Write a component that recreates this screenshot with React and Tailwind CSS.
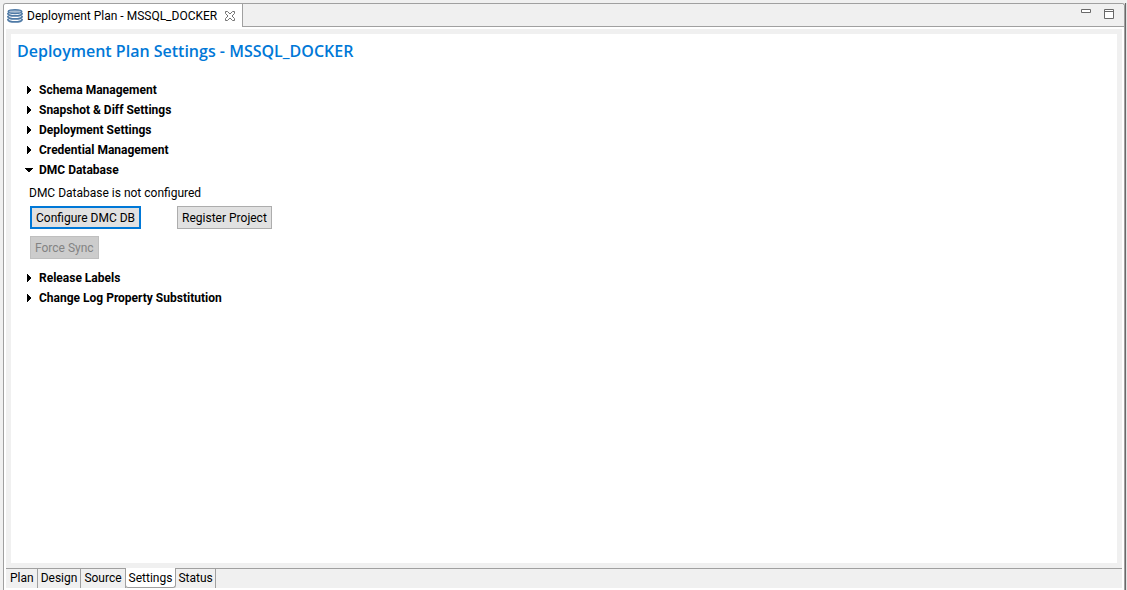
import { useState } from "react";

function Arrow({ open }) {
  return (
    <svg width="8" height="8" viewBox="0 0 8 8" shapeRendering="crispEdges" aria-hidden="true">
      {open ? <path d="M0 2h8v1H7v1H6v1H5v1H3V5H2V4H1V3H0z" /> : <path d="M2 0h1v1h1v1h1v1h1v2H5v1H4v1H3v1H2z" />}
    </svg>
  );
}

function Section({ title, defaultOpen = false, children }) {
  const [open, setOpen] = useState(defaultOpen);
  return (
    <section>
      <h2>
        <button
          type="button"
          aria-expanded={open}
          onClick={() => setOpen(!open)}
          className="flex h-5 items-center gap-1.5 text-xs font-bold whitespace-nowrap"
        >
          <Arrow open={open} />
          {title}
        </button>
      </h2>
      {open && children}
    </section>
  );
}

function DatabaseIcon() {
  return (
    <svg width="16" height="14" viewBox="0 0 16 14" aria-hidden="true">
      <ellipse cx="8" cy="2.600" rx="6.800" ry="1.900" fill="#a9bdd2" stroke="#4f7aa6" strokeWidth="1.400" />
      <path
        d="M1 4.700c.8 2.900 13.200 2.900 14 0M1 7.700c.8 2.900 13.200 2.900 14 0M1 10.700c.8 2.900 13.200 2.900 14 0"
        fill="none"
        stroke="#4f7aa6"
        strokeWidth="1.900"
        strokeLinecap="round"
      />
    </svg>
  );
}

function CloseIcon() {
  return (
    <svg width="10" height="10" viewBox="0 0 10 10" fill="#fff" stroke="#737373" aria-hidden="true">
      <path d="M.5.5h2L5 3 7.500.5h2v2L7 5l2.500 2.500v2h-2L5 7 2.500 9.500h-2v-2L3 5 .5 2.500z" />
    </svg>
  );
}

const pages = ["Plan", "Design", "Source", "Settings", "Status"];

export default function App() {
  const [page, setPage] = useState("Settings");
  return (
    <div className="flex h-screen bg-[#f0f0f0] pt-[3px] pl-[3px] font-[Roboto,'Open_Sans',sans-serif] text-xs text-black">
      <div className="flex min-w-0 flex-1 flex-col rounded-t-[3px] border-x border-t border-[#a0a0a0] bg-white">
        <header className="flex h-[23px] shrink-0">
          <div className="flex items-center gap-1 rounded-tl-[3px] bg-white pr-[7px] pl-[3px]">
            <DatabaseIcon />
            <span className="whitespace-nowrap">Deployment Plan - MSSQL_DOCKER</span>
            <button type="button" aria-label="Close" className="ml-1">
              <CloseIcon />
            </button>
          </div>
          <div className="flex flex-1 items-start justify-end gap-[13px] rounded-tr-[3px] border-b border-l border-[#a0a0a0] bg-[#f0f0f0] pt-[5px] pr-2.5">
            <button type="button" aria-label="Minimize">
              <svg width="10" height="10" viewBox="0 0 10 10" fill="#fff" stroke="#696969" aria-hidden="true">
                <path d="M.5.5h9v3h-9z" />
              </svg>
            </button>
            <button type="button" aria-label="Maximize">
              <svg width="10" height="10" viewBox="0 0 10 10" fill="#fff" stroke="#696969" aria-hidden="true">
                <path d="M.5.5h9v9h-9zM.5 2.500h9" />
              </svg>
            </button>
          </div>
        </header>

        <div className="m-0.5 flex min-h-0 flex-1 flex-col bg-[#f0f0f0]">
          <main className="m-[5px] min-h-0 flex-1 overflow-hidden bg-white px-1.5 pt-[5px]">
            <h1 className="font-['Open_Sans',sans-serif] text-base leading-6 font-semibold whitespace-nowrap text-[#0078d7]">
              Deployment Plan Settings - MSSQL_DOCKER
            </h1>
            <div className="mt-[17px] pl-2">
              <Section title="Schema Management" />
              <Section title="Snapshot & Diff Settings" />
              <Section title="Deployment Settings" />
              <Section title="Credential Management" />
              <Section title="DMC Database" defaultOpen>
                <div className="pt-[3px] pb-2 pl-1">
                  <p className="leading-5">DMC Database is not configured</p>
                  <div className="mt-[3px] grid w-max grid-cols-[auto_auto] gap-x-9 gap-y-[7px] pb-px pl-px">
                    <button type="button" className="h-[23px] border-2 border-[#0078d7] bg-[#e1e1e1] px-1 whitespace-nowrap">
                      Configure DMC DB
                    </button>
                    <button type="button" className="h-[23px] border border-[#adadad] bg-[#e1e1e1] px-1 whitespace-nowrap">
                      Register Project
                    </button>
                    <button
                      type="button"
                      disabled
                      className="h-[23px] justify-self-start border border-[#bfbfbf] bg-[#cccccc] px-1 whitespace-nowrap text-[#838383]"
                    >
                      Force Sync
                    </button>
                  </div>
                </div>
              </Section>
              <Section title="Release Labels" />
              <Section title="Change Log Property Substitution" />
            </div>
          </main>
          <nav role="tablist" className="flex h-5 shrink-0 border-t border-[#a0a0a0]">
            {pages.map((name) => (
              <button
                key={name}
                type="button"
                role="tab"
                aria-selected={name === page}
                onClick={() => setPage(name)}
                className={
                  name === page
                    ? "-mt-px -ml-px rounded-b-[3px] border-x border-b border-[#a0a0a0] bg-white px-[3px]"
                    : "border-r border-[#a0a0a0] px-[3px] pb-px first:pl-1 last:px-0.5"
                }
              >
                {name}
              </button>
            ))}
          </nav>
        </div>
      </div>
      <div className="w-0.5 border-l border-[#696969] bg-[#e3e3e3]" />
    </div>
  );
}
